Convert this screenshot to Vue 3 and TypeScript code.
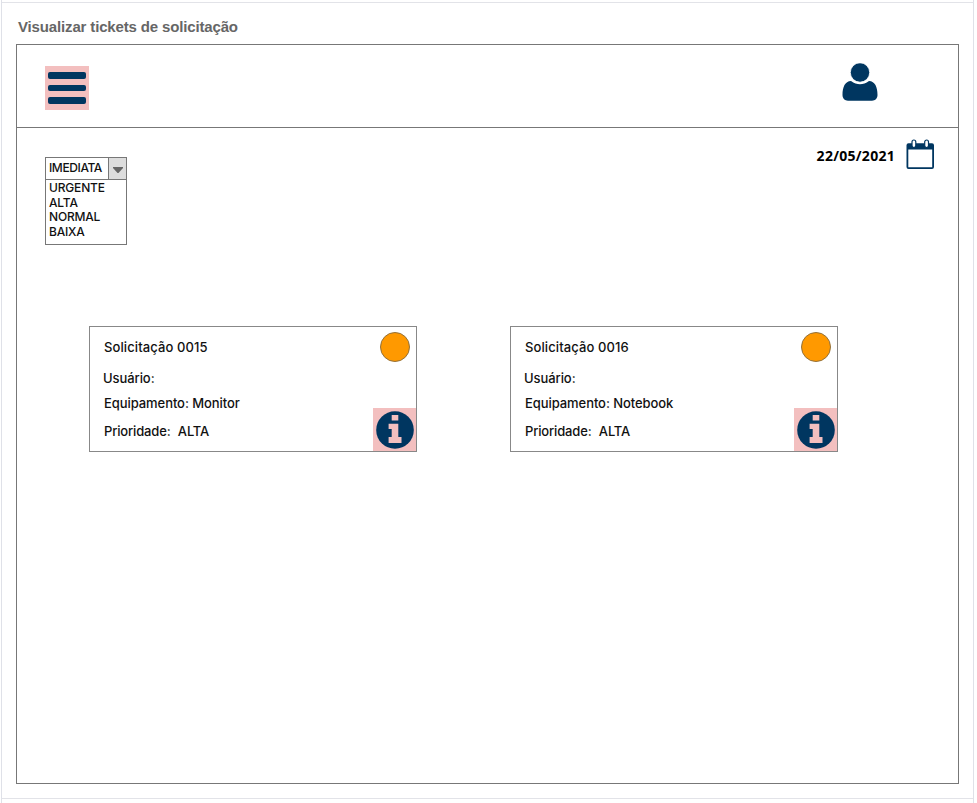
<script setup lang="ts">
interface Ticket {
  id: string
  equipment: string
  priority: string
}

const tickets: Ticket[] = [
  { id: '0015', equipment: 'Monitor', priority: 'ALTA' },
  { id: '0016', equipment: 'Notebook', priority: 'ALTA' },
]

const selected = 'IMEDIATA'
const options: string[] = ['URGENTE', 'ALTA', 'NORMAL', 'BAIXA']
</script>

<template>
  <div class="page">
    <section class="sheet">
      <h1 class="title">Visualizar tickets de solicitação</h1>
      <main class="frame">
        <header class="topbar">
          <button class="menu" aria-label="Menu">
            <span class="bar"></span>
            <span class="bar"></span>
            <span class="bar"></span>
          </button>
          <svg class="user" viewBox="0 0 36 40" width="36" height="40">
            <path d="M9 18 C3 18.300 .5 24 .5 32 C.5 35.500 2.800 37.700 6 37.700 H30 C33.200 37.700 35.500 35.500 35.500 32 C35.500 24 33 18.300 27 18 C24 20.300 21 21.300 18 21.300 C15 21.300 12 20.300 9 18 Z" />
            <circle cx="18" cy="9.500" r="9.700" />
          </svg>
        </header>
        <div class="tools">
          <div class="select">
            <div class="current">
              <span class="value">{{ selected }}</span>
              <span class="toggle">
                <svg viewBox="0 0 10 6" width="10" height="6"><path d="M0 0H10V1L5.500 6H4.500L0 1Z" /></svg>
              </span>
            </div>
            <ul class="options">
              <li v-for="option in options" :key="option">{{ option }}</li>
            </ul>
          </div>
          <div class="date">
            <span class="day">22/05/2021</span>
            <svg class="calendar" viewBox="0 0 28 31" width="28" height="31">
              <path fill-rule="evenodd" d="M2.500 4.300H26Q28 4.300 28 6.300V28Q28 30 26 30H2.500Q.5 30 .5 28V6.300Q.5 4.300 2.500 4.300ZM2.300 10.500V28.200H26.200V10.500Z" />
              <rect class="ring" x="6" y="1" width="3.800" height="7.500" rx="1.900" />
              <rect class="ring" x="18.700" y="1" width="3.800" height="7.500" rx="1.900" />
            </svg>
          </div>
        </div>
        <div class="cards">
          <article v-for="ticket in tickets" :key="ticket.id" class="card">
            <div class="details">
              <p class="number">Solicitação {{ ticket.id }}</p>
              <p class="person">Usuário:</p>
              <p class="equipment">Equipamento: {{ ticket.equipment }}</p>
              <p class="priority">Prioridade: <span class="level">{{ ticket.priority }}</span></p>
            </div>
            <div class="side">
              <span class="status"></span>
              <button class="info" aria-label="Detalhes">
                <svg viewBox="0 0 38 38" width="38" height="38">
                  <circle cx="19" cy="19" r="18.800" />
                  <path class="mark" d="M15.700 4H22.300V9.600H15.700ZM12.600 12.700H22.300V26H25.500V32H12.600V26H15.700V18.100H12.600Z" />
                </svg>
              </button>
            </div>
          </article>
        </div>
      </main>
    </section>
  </div>
</template>

<style>
body {
  background: #fff;
}
</style>

<style scoped>
* {
  box-sizing: border-box;
}
.page {
  width: 973px;
  height: 803px;
  margin-left: 1px;
  padding-top: 2px;
  border-left: 1px solid #dfe1e8;
  border-right: 1px solid #dfe1e8;
  font-family: Inter, "Liberation Sans", sans-serif;
  color: #111;
}
.sheet {
  height: 797px;
  padding: 0 14px;
  border-top: 1px solid #e2e3e8;
  border-bottom: 1px solid #e2e3e8;
}
.title {
  height: 41px;
  margin: 0;
  padding: 15px 0 0 2px;
  font: bold 15px/18px "Liberation Sans", Arial, sans-serif;
  letter-spacing: -0.150px;
  color: #666;
}
.frame {
  width: 943px;
  height: 740px;
  border: 1px solid #777;
}
.topbar {
  display: flex;
  justify-content: space-between;
  height: 83px;
  padding: 18px 80px 0 28px;
  border-bottom: 1px solid #777;
}
.topbar,
.tools {
  align-items: flex-start;
}
.menu {
  display: flex;
  flex-direction: column;
  gap: 6px;
  width: 44px;
  height: 44px;
  margin-top: 3px;
  padding: 6px 3px;
  border: 0;
  background: #f3bfbf;
}
.bar {
  height: 6.500px;
  border-radius: 2px;
  background: #003660;
}
svg {
  display: block;
  fill: #003660;
}
.user circle {
  stroke: #fff;
  stroke-width: 0.800px;
}
.calendar .ring {
  fill: #fff;
  stroke: #003660;
  stroke-width: 1.200px;
}
.tools {
  display: flex;
  justify-content: space-between;
  height: 198px;
  padding: 11px 24px 0 28px;
}
.select {
  width: 82px;
  height: 88px;
  margin-top: 18px;
  border: 1px solid #777;
  font-size: 12px;
  font-weight: 500;
  letter-spacing: -0.180px;
}
.current {
  display: flex;
  height: 22px;
  border-bottom: 1px solid #777;
}
.value {
  flex: 1;
  padding-left: 3px;
  line-height: 20px;
  letter-spacing: -0.400px;
}
.toggle {
  display: flex;
  align-items: center;
  justify-content: center;
  width: 18px;
  padding-top: 3px;
  border-left: 1px solid #777;
  background: #ddd;
}
.toggle svg {
  fill: #666;
}
.options {
  margin: 0;
  padding: 1px 0 0 3px;
  list-style: none;
  line-height: 14.600px;
}
.date {
  display: flex;
  gap: 11px;
}
.day {
  padding-top: 8px;
  font: bold 14px/18px "Open Sans", sans-serif;
  letter-spacing: 0.280px;
  color: #000;
}
.cards {
  display: flex;
  gap: 93px;
  padding-left: 72px;
}
.card {
  display: flex;
  justify-content: space-between;
  width: 328px;
  height: 126px;
  border: 1px solid #888;
}
.details {
  padding: 12px 0 0 14px;
  font-size: 13px;
  font-weight: 500;
  line-height: 17px;
  letter-spacing: -0.070px;
}
.details p {
  margin: 0;
  white-space: nowrap;
}
.details .number {
  letter-spacing: 0.100px;
}
.details .person {
  margin: 14px 0 8px -1px;
}
.details .priority {
  margin-top: 11px;
  letter-spacing: -0.150px;
}
.level {
  margin-left: 4px;
}
.side {
  display: flex;
  flex-direction: column;
  align-items: flex-end;
  justify-content: space-between;
  padding-top: 5px;
}
.status {
  width: 30px;
  height: 30px;
  margin-right: 6px;
  border: 1px solid #93713b;
  border-radius: 50%;
  background: #ff9900;
}
.info {
  width: 43px;
  height: 43px;
  padding: 3px;
  border: 0;
  background: #f3bfbf;
}
.mark {
  fill: #f3bfbf;
}
</style>
